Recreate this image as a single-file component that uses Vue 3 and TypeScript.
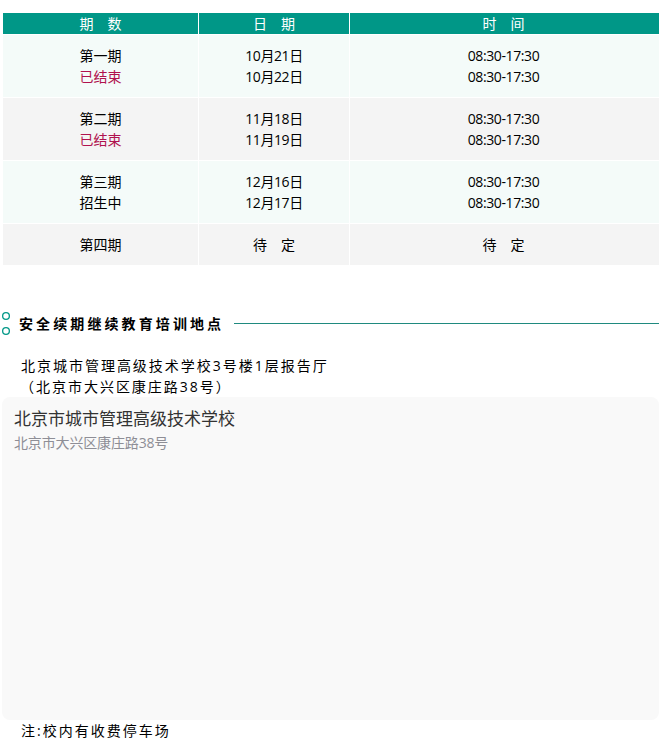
<script setup lang="ts">
interface Row { period: string; status?: string; statusRed?: boolean; dates: string[]; times: string[]; tone: string }
const rows: Row[] = [
  { period: '第一期', status: '已结束', statusRed: true, dates: ['10月21日', '10月22日'], times: ['08:30-17:30', '08:30-17:30'], tone: 'mint' },
  { period: '第二期', status: '已结束', statusRed: true, dates: ['11月18日', '11月19日'], times: ['08:30-17:30', '08:30-17:30'], tone: 'grey' },
  { period: '第三期', status: '招生中', dates: ['12月16日', '12月17日'], times: ['08:30-17:30', '08:30-17:30'], tone: 'mint' },
  { period: '第四期', dates: ['待　定'], times: ['待　定'], tone: 'grey' },
]
</script>

<template>
  <div class="page">
    <table class="schedule">
      <colgroup>
        <col class="c1" />
        <col class="c2" />
        <col class="c3" />
      </colgroup>
      <thead>
        <tr>
          <th>期　数</th>
          <th>日　期</th>
          <th class="last">时　间</th>
        </tr>
      </thead>
      <tbody>
        <tr v-for="r in rows" :key="r.period" :class="r.tone">
          <td>
            <div>{{ r.period }}</div>
            <div v-if="r.status" :class="{ red: r.statusRed }">{{ r.status }}</div>
          </td>
          <td :class="{ num: r.status }"><div v-for="(d, i) in r.dates" :key="i">{{ d }}</div></td>
          <td class="last" :class="{ num: r.status }"><div v-for="(t, i) in r.times" :key="i">{{ t }}</div></td>
        </tr>
      </tbody>
    </table>

    <div class="title-row">
      <div class="dots"><i></i><i></i></div>
      <h2>安全续期继续教育培训地点</h2>
      <span class="rule"></span>
    </div>

    <div class="address">
      <p>北京城市管理高级技术学校3号楼1层报告厅</p>
      <p class="sub">（北京市大兴区康庄路38号）</p>
    </div>

    <div class="map">
      <div class="map-name">北京市城市管理高级技术学校</div>
      <div class="map-addr">北京市大兴区康庄路38号</div>
    </div>

    <p class="note">注:校内有收费停车场</p>
  </div>
</template>

<style>
html, body { margin: 0; background: #fff; }
</style>

<style scoped>
.page {
  width: 663px;
  height: 746px;
  overflow: hidden;
  box-sizing: border-box;
  padding-top: 12px;
  font-family: "Open Sans", "Noto Sans CJK SC", sans-serif;
  font-size: 14px;
  color: #000;
}
.schedule {
  width: 658px;
  margin-left: 2px;
  border-collapse: separate;
  border-spacing: 1px;
  table-layout: fixed;
}
.c1 { width: 195px; }
.c2 { width: 150px; }
th {
  height: 21px;
  padding: 0;
  background: #009787;
  color: #fff;
  font-weight: 400;
  font-size: 14px;
  line-height: 21px;
}
td {
  padding: 0;
  text-align: center;
  line-height: 21px;
  height: 62px;
}
td.num { letter-spacing: -0.4px; }
.last { padding-right: 2px; }
tr:last-child td { height: 41px; }
.mint td { background: #f4fbf9; }
.grey td { background: #f4f4f4; }
.red { color: #b0124e; }
.title-row {
  display: flex;
  align-items: center;
  margin-top: 45px;
  height: 24px;
}
.dots {
  display: flex;
  flex-direction: column;
  gap: 7px;
  margin-left: 2px;
  width: 17px;
}
.dots i {
  display: block;
  width: 8px;
  height: 8px;
  box-sizing: border-box;
  box-shadow: inset 0 0 0 1.3px #009787;
  border-radius: 50%;
}
h2 {
  margin: 0;
  font-size: 14px;
  font-weight: 700;
  letter-spacing: 3.1px;
  color: #000;
  white-space: nowrap;
}
.rule {
  width: 425px;
  height: 1px;
  margin-left: 10px;
  background: #1f8a7f;
}
.address {
  margin: 20px 0 0 21px;
  letter-spacing: 1.98px;
  line-height: 21px;
}
.address p { margin: 0; }
.address .sub { margin-left: -1px; }
.map {
  margin: 0 4px 0 2px;
  height: 323px;
  box-sizing: border-box;
  padding: 9px 12px;
  background: #f9f9f9;
  border-radius: 8px;
}
.map-name { font-size: 17px; line-height: 26px; color: #333; }
.map-addr { font-size: 14px; line-height: 20px; margin-top: 1px; color: #8e8e96; letter-spacing: -0.15px; }
.note {
  margin: 0 0 0 21px;
  letter-spacing: 2px;
  line-height: 21px;
}
</style>
